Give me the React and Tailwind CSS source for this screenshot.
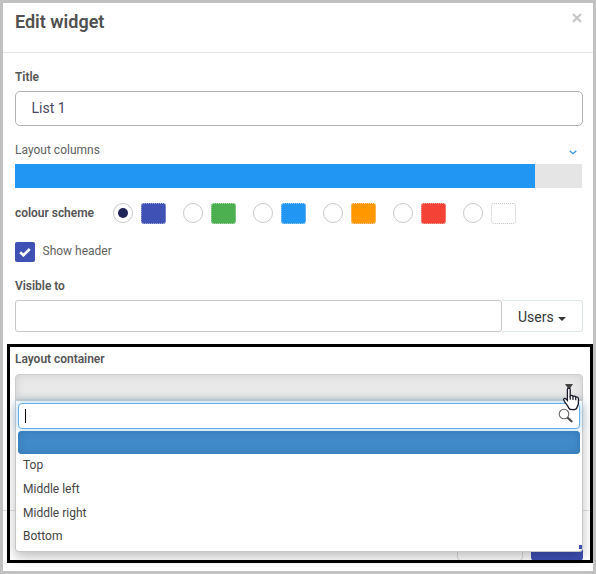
import React from "react";

const schemes = [
  { name: "indigo", fill: "bg-[#3f51b5]", border: "border-[#a9b1dc]", checked: true },
  { name: "green", fill: "bg-[#4caf50]", border: "border-[#b0d9b2]" },
  { name: "blue", fill: "bg-[#2196f3]", border: "border-[#9fcdf3]" },
  { name: "orange", fill: "bg-[#ff9800]", border: "border-[#f5cf96]" },
  { name: "red", fill: "bg-[#f44336]", border: "border-[#f2aaa5]" },
  { name: "white", fill: "bg-white", border: "border-[#c4c4c4]" },
];

function Label({ children }) {
  return <div className="h-4 text-[12px] leading-4 font-semibold tracking-[-0.03px] text-[#555]">{children}</div>;
}

function SchemeOption({ scheme }) {
  return (
    <div className="flex w-[70px] shrink-0 items-start gap-2">
      <span className="flex size-5 items-center justify-center rounded-full border border-[#c8c8c8] bg-white">
        {scheme.checked && <span className="size-[10px] rounded-full bg-[#1f2559]" />}
      </span>
      <span className={`h-[21px] w-[25px] rounded-[3px] border border-dotted ${scheme.fill} ${scheme.border}`} />
    </div>
  );
}

function Menu() {
  return (
    <div className="absolute top-[25px] left-0 h-[153px] w-[568px] rounded-b-[4px] border border-t-2 border-[#c4c8cb] bg-white px-[2px] shadow-[0_5px_12px_rgba(0,0,0,0.25)]">
      <div className="mt-[2px] flex h-[26px] items-center rounded-[4px] border border-[#66afe9] bg-white pr-[5px] pl-[6px] shadow-[0_0_8px_rgba(102,175,233,0.6)]">
        <span className="h-[14px] w-px bg-black" />
        <svg className="mt-[-1px] ml-auto" width="16" height="16" viewBox="0 0 16 16" fill="none">
          <circle cx="6" cy="6" r="4.8" stroke="#666" strokeWidth="1.1" />
          <path d="M9.5 9.5 14.2 14" stroke="#444" strokeWidth="2" />
        </svg>
      </div>
      <div className="mt-[2px] h-[23px] rounded-[4px] bg-[#428bca] shadow-[inset_0_0_10px_#3276b1]" />
      <div className="pl-[5px] text-[12px] leading-[23.8px] text-[#454545]">
        {["Top", "Middle left", "Middle right", "Bottom"].map((item) => (
          <div key={item}>{item}</div>
        ))}
      </div>
      <span className="absolute right-0 bottom-[2px] h-[4px] w-[3px] bg-[#3f51b5]" />
    </div>
  );
}

export default function App() {
  return (
    <div className="relative h-[574px] w-[596px] overflow-hidden border-[3px] border-[#c1c1c1] bg-white font-['Roboto',sans-serif]">
      <div className="flex h-[50px] justify-between border-b border-[#e3e3e3] pr-[11px] pl-3">
        <h1 className="pt-[7px] text-[18px] leading-6 font-semibold text-[#505050]">Edit widget</h1>
        <svg className="mt-[10px]" width="10" height="10" viewBox="0 0 10 10">
          <path d="M1 1 9 9M9 1 1 9" stroke="#c8c8c8" strokeWidth="2.3" />
        </svg>
      </div>

      <div className="h-[457px] px-3 pt-4">
        <div className="w-[568px]">
          <Label>Title</Label>
          <div className="mt-[6px] h-[35px] rounded-[5px] border border-[#b3b3b3] pl-[15.5px] text-[14px] leading-[33px] text-[#4a4a66]">
            List 1
          </div>

          <div className="mt-4 flex h-4 justify-between pr-[6px] text-[12px] leading-4 text-[#626262]">
            <span>Layout columns</span>
            <svg className="mt-[8px]" width="8" height="5" viewBox="0 0 8 5" fill="none">
              <path d="M.7.8 4 3.7 7.3.8" stroke="#3793e0" strokeWidth="1.2" />
            </svg>
          </div>
          <div className="mt-[6px] h-6 w-[567px] bg-[#e5e5e5]">
            <div className="h-6 w-[520px] bg-[#2196f3]" />
          </div>

          <div className="mt-[15px] flex h-[21px] items-start">
            <div className="mt-[2px] w-[98px] shrink-0">
              <Label>colour scheme</Label>
            </div>
            {schemes.map((scheme) => (
              <SchemeOption key={scheme.name} scheme={scheme} />
            ))}
          </div>

          <div className="mt-[18px] flex h-5 items-center gap-[7.5px]">
            <span className="flex size-5 items-center justify-center rounded-[2px] bg-[#3f51b5]">
              <svg width="12" height="9" viewBox="0 0 12 9" fill="none">
                <path d="m1.2 4.2 3.2 3.1L10.8 1" stroke="white" strokeWidth="2.6" />
              </svg>
            </span>
            <span className="mt-[-2px] text-[12px] leading-4 text-[#626262]">Show header</span>
          </div>

          <div className="mt-4">
            <Label>Visible to</Label>
          </div>
          <div className="mt-[6px] flex h-8">
            <div className="w-[487px] rounded-[3px] border border-[#c6c9ca]" />
            <div className="flex flex-1 items-center rounded-r-[3px] border border-l-0 border-[#dde6e8] pt-[2px] pl-4 text-[14px] text-[#373737]">
              Users
              <span className="ml-[4px] mt-[3px] border-x-4 border-t-4 border-x-transparent border-t-[#333]" />
            </div>
          </div>

          <div className="mt-[19px]">
            <Label>Layout container</Label>
          </div>
          <div className="relative z-10 mt-[7px] h-[27px] rounded-t-[4px] border border-[#cdcdcd] bg-[#e9e9e9] shadow-[inset_0_0_10px_#cfcfcf]">
            <span className="absolute top-[9px] right-[9px] border-x-4 border-t-[6px] border-x-transparent border-t-[#444]" />
            <div className="absolute -top-px -left-px">
              <Menu />
            </div>
            <svg className="absolute top-[12px] right-[1px]" width="20" height="26" viewBox="0 0 20 26">
              <path
                d="M6.4 2.7C6.4.7 9.2.7 9.2 2.7v6.2c.8-.8 2.5-.5 2.8.5 1-.7 2.4-.2 2.7.8 1.1-.5 2.7.1 2.7 1.6v4.4c0 2-1.4 3.3-1.6 4.8-.9 2.2-7 2.2-8 .1-1-2.8-3.1-4.6-4.7-7.2-1.3-2 .3-3.3 1.8-2l1.5 1.5Z"
                fill="white"
                stroke="#18182a"
                strokeWidth="1.3"
              />
              <path d="M9.2 8.7v4M12 9.4v3.5M14.7 10.2v3" stroke="#18182a" strokeWidth="1.2" />
            </svg>
          </div>
        </div>
      </div>

      <div className="flex h-[51px] justify-end gap-2 border-t border-[#e0e0e0] pr-[10px]">
        <div className="mt-[18px] h-[32px] w-[66px] rounded-[4px] border border-[#dcdcdc] bg-white" />
        <div className="mt-[18px] h-[32px] w-[52px] rounded-[4px] bg-[#3f51b5]" />
      </div>

      <div className="pointer-events-none absolute top-[341px] left-1 z-20 h-[219px] w-[586px] border-[3px] border-black" />
    </div>
  );
}
